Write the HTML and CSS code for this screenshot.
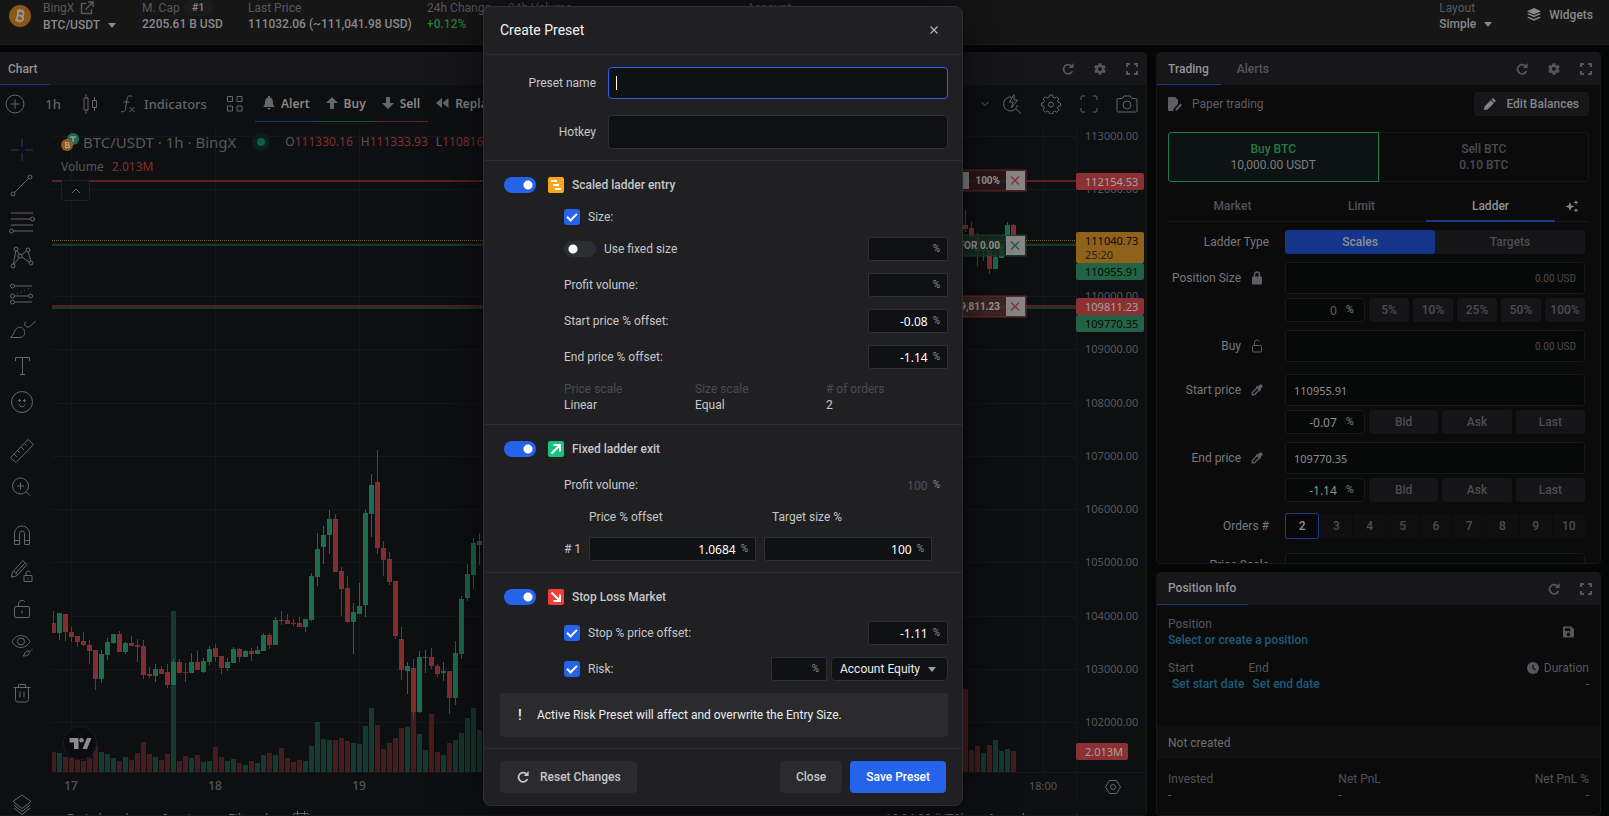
FILE: index.html
```html
<!DOCTYPE html>
<html lang="en">
<head>
<meta charset="utf-8">
<title>Create Preset</title>
<link rel="stylesheet" href="styles.css">
</head>
<body>
<svg class="sprite" aria-hidden="true">
  <symbol id="refresh" viewBox="0 0 12 12"><path d="M9.6 3.2A4.6 4.6 0 1 0 10.4 8" fill="none" stroke="currentColor" stroke-width="1.8"/><path d="M11.6 0v5H6.8z" fill="currentColor"/></symbol>
  <symbol id="gear" viewBox="0 0 24 24"><path fill="currentColor" fill-rule="evenodd" d="M19.4 13c0-.3.1-.6.1-1s0-.7-.1-1l2.1-1.6c.2-.2.3-.4.1-.7l-2-3.4c-.1-.2-.4-.3-.6-.2l-2.5 1a7 7 0 0 0-1.7-1L14.4 2.500c0-.3-.2-.5-.5-.5h-4c-.2 0-.5.2-.5.4L9 5.100a8 8 0 0 0-1.700 1l-2.500-1c-.2-.1-.5 0-.6.2l-2 3.400c-.1.300-.1.500.1.700L4.500 11a7 7 0 0 0 0 2l-2.100 1.600c-.2.200-.3.400-.1.700l2 3.400c.1.200.4.300.6.200l2.500-1 1.700 1 .4 2.700c0 .2.200.4.500.4h4c.2 0 .5-.2.500-.4l.4-2.700 1.700-1 2.500 1c.2.100.5 0 .6-.2l2-3.400c.1-.2.100-.5-.1-.700zM12 15.500a3.500 3.500 0 1 1 0-7 3.500 3.500 0 0 1 0 7z"/></symbol>
  <symbol id="expand" viewBox="0 0 12 12"><path d="M1 4V1h3M8 1h3v3M11 8v3H8M4 11H1V8" fill="none" stroke="currentColor" stroke-width="2"/></symbol>
  <symbol id="caret" viewBox="0 0 8 5"><path d="M0 0h8L4 5z" fill="currentColor"/></symbol>
  <symbol id="drop" viewBox="0 0 14 14"><path fill="currentColor" d="M12.900 1.100a2.200 2.200 0 0 0-3.100 0L8 2.900l-.9-.8-1.500 1.500 4.800 4.800 1.500-1.500-.8-.9 1.800-1.800a2.200 2.200 0 0 0 0-3.100z"/><path d="M7 4.500L1.500 10v2.500H4L9.500 7" fill="none" stroke="currentColor" stroke-width="1.600"/></symbol>
  <symbol id="lock" viewBox="0 0 12 14"><rect x="1" y="5.500" width="10" height="8" rx="1" fill="currentColor"/><path d="M3.500 6V3.500a2.500 2.500 0 0 1 5 0V6" fill="none" stroke="currentColor" stroke-width="1.500"/></symbol>
  <symbol id="unlock" viewBox="0 0 12 14"><rect x="1.500" y="6.500" width="9" height="6.500" rx="1" fill="none" stroke="currentColor"/><path d="M3.500 6.500V3.500a2.500 2.500 0 0 1 4.800-1" fill="none" stroke="currentColor"/></symbol>
</svg>

<header class="topbar">
  <svg class="coin" viewBox="0 0 22 22"><circle cx="11" cy="11" r="11" fill="#8a5617"/><g transform="rotate(12 11 11)" fill="none" stroke="#9a9a9a" stroke-width="1.700"><path d="M8.500 6h3.200a2.300 2.300 0 0 1 0 4.800H8.500zM8.500 10.800h3.700a2.400 2.400 0 0 1 0 4.900H8.500zM7 6h2M7 15.700h2"/><path d="M9.800 4v2M12.200 4v2M9.800 15.500v2M12.200 15.500v2" stroke-width="1.200"/></g></svg>
  <div class="stat stat--pair"><span class="stat__label">BingX <svg class="i14" viewBox="0 0 14 14"><path d="M6 2.500H1.500v10h10V8M8 1h5v5M13 1L5.500 8.500" fill="none" stroke="currentColor" stroke-width="1.500"/></svg></span><button class="stat__value plain">BTC/USDT <svg class="caret"><use href="#caret"/></svg></button></div>
  <div class="stat"><span class="stat__label">M. Cap <b class="rank">#1</b></span><span class="stat__value">2205.61 B USD</span></div>
  <div class="stat"><span class="stat__label">Last Price</span><span class="stat__value">111032.06 (~111,041.98 USD)</span></div>
  <div class="stat"><span class="stat__label">24h Change</span><span class="stat__value up">+0.12%</span></div>
  <div class="stat"><span class="stat__label">24h Volume</span></div>
  <div class="stat"><span class="stat__label">Account</span></div>
  <div class="stat"><span class="stat__label">Layout</span><button class="stat__value plain">Simple <svg class="caret"><use href="#caret"/></svg></button></div>
  <button class="plain widgets"><svg class="i14" viewBox="0 0 14 14" fill="currentColor"><path d="M7 0l7 3.200-7 3.200-7-3.200zM0 6l1.800-.8L7 7.600l5.200-2.400L14 6 7 9.200zM0 9.500l1.800-.8L7 11l5.200-2.300 1.800.8-7 3.300z"/></svg>Widgets</button>
</header>

<main class="workspace">
  <section class="panel chart">
    <div class="panel__head"><a class="tab tab--on" href="#">Chart</a><span class="grow"></span>
      <button class="plain" aria-label="Refresh"><svg class="i12"><use href="#refresh"/></svg></button><button class="plain" aria-label="Settings"><svg class="i14"><use href="#gear"/></svg></button><button class="plain" aria-label="Expand"><svg class="i12"><use href="#expand"/></svg></button></div>
    <div class="tv-top">
      <button class="plain tv-plus" aria-label="Add"><svg class="i20" viewBox="0 0 20 20"><circle cx="10" cy="10" r="9"/><path d="M10 5.500v9M5.500 10h9"/></svg></button>
      <button class="plain tv-int">1h</button>
      <button class="plain tv-type" aria-label="Candles"><svg width="14" height="20" viewBox="0 0 14 20"><path d="M1 4h4v12H1zM3 0v4M3 16v4M9.500 6.500h4v7h-4zM11.500 3v3.500M11.500 13.500V17"/></svg></button>
      <button class="plain tv-ind"><svg width="14" height="18" viewBox="0 0 14 18"><path d="M11 1.500C8 0 6.500 1 6 4L4.500 14c-.4 2.500-2 3.500-4.500 2.500M2.500 7h6M8.500 12l5 5M13.500 12l-5 5"/></svg>Indicators</button>
      <button class="plain tv-grid" aria-label="Templates"><svg width="18" height="18" viewBox="0 0 18 18"><path d="M1.500 1.500h5v5h-5zM11 1.500h5v5h-5zM1.500 11h5v5h-5zM11 11h5v5h-5z"/></svg></button>
      <button class="tv-act tv-act--blue"><svg width="12" height="14" viewBox="0 0 12 14"><path class="solid" d="M5 0h2v1.500c2.500.5 3 2.500 3 5 0 2 .5 3 2 4.500H0c1.500-1.500 2-2.500 2-4.500 0-2.500.5-4.500 3-5zM4.500 12h3a1.500 1.500 0 0 1-3 0z"/></svg>Alert</button>
      <button class="tv-act tv-act--green"><svg width="12" height="12" viewBox="0 0 12 12"><path class="solid" d="M6 0l6 6H8v6H4V6H0z"/></svg>Buy</button>
      <button class="tv-act tv-act--red"><svg width="12" height="12" viewBox="0 0 12 12"><path class="solid" d="M6 12l6-6H8V0H4v6H0z"/></svg>Sell</button>
      <button class="tv-act"><svg width="13" height="10" viewBox="0 0 13 10"><path class="solid" d="M6 0v10L0 5zM12.500 0v10l-6-5z"/></svg>Replay</button>
      <span class="grow"></span>
      <button class="plain tv-more" aria-label="More"><svg width="8" height="6" viewBox="0 0 8 6"><path d="M.5 1L4 4.500 7.500 1"/></svg></button>
      <button class="plain" aria-label="Quick search"><svg class="i20" viewBox="0 0 20 20"><path d="M8 3a7 7 0 1 0 6.500 8M13 15l5 4.500M11 .5L6.500 8H10l-1.500 6L14.500 6H11z"/></svg></button>
      <button class="plain" aria-label="Chart settings"><svg class="i20" viewBox="0 0 20 20"><path d="M8.500 1h3l.6 2.300 1.600.7 2-1.200 2.100 2.100-1.200 2 .7 1.600 2.200.6v2.800l-2.200.6-.7 1.600 1.200 2-2.100 2.100-2-1.200-1.600.7-.6 2.300h-3l-.6-2.300-1.600-.7-2 1.200-2.100-2.100 1.200-2-.7-1.600L.5 11.900V9.100l2.200-.6.700-1.600-1.200-2 2.100-2.100 2 1.200 1.600-.7z"/><circle cx="10" cy="10.500" r="2.500"/></svg></button>
      <button class="plain" aria-label="Fullscreen"><svg width="18" height="18" viewBox="0 0 18 18"><path d="M1 5V2.500A1.500 1.500 0 0 1 2.500 1H5M13 1h2.500A1.500 1.500 0 0 1 17 2.500V5M17 13v2.500a1.500 1.500 0 0 1-1.500 1.500H13M5 17H2.500A1.500 1.500 0 0 1 1 15.500V13"/></svg></button>
      <button class="plain" aria-label="Snapshot"><svg width="22" height="18" viewBox="0 0 22 18"><path d="M2.500 3.500H6L8 1h6l2 2.500h3.500A1.500 1.500 0 0 1 21 5v10.500a1.500 1.500 0 0 1-1.500 1.500h-17A1.500 1.500 0 0 1 1 15.500V5a1.500 1.500 0 0 1 1.500-1.500z"/><circle cx="11" cy="10" r="4"/></svg></button>
    </div>
    <div class="tv-body">
      <nav class="tools">
        <svg class="cross" viewBox="0 0 28 28"><path d="M14 3v8M14 17v8M3 14h8M17 14h8"/></svg>
        <svg viewBox="0 0 28 28"><circle cx="22" cy="5" r="2"/><circle cx="5" cy="22" r="2"/><path d="M6.500 20.500l14-14"/></svg>
        <svg viewBox="0 0 28 28"><path d="M3 5h22M3 11h19.500M3 17h22M6 23h19"/><circle cx="24.500" cy="11" r="2"/><circle cx="3.500" cy="23" r="2"/></svg>
        <svg viewBox="0 0 28 28"><circle cx="8" cy="5" r="2"/><circle cx="20" cy="6" r="2"/><circle cx="12" cy="12" r="2"/><circle cx="23" cy="19" r="2"/><circle cx="5" cy="22" r="2"/><path d="M7.800 7L5.300 20M9 6.800l2.300 3.500M13.500 10.700l5-3.500M20.300 8l2.500 9M13.700 13l7.800 5M11 13.700L6 20.300"/></svg>
        <svg viewBox="0 0 28 28"><circle cx="4.500" cy="6" r="2"/><circle cx="4.500" cy="16" r="2"/><circle cx="22.500" cy="16" r="2"/><circle cx="4.500" cy="22" r="2"/><path d="M6.500 6H24M6.500 16h14M6.500 22H24"/><path d="M9 14l14-6.500" stroke-dasharray="1 3"/></svg>
        <svg viewBox="0 0 28 28"><path d="M2.500 21.500c3-2 3.500-6 5.500-8.500 2-2.300 5.500-2.300 7.500 0 2 2.500 2 8.500-4.500 8.500zM18 5.500c-2 2-1.500 3.500-.5 4.500 1.500 1.500 3.500 1.500 5 0L28 4.500"/></svg>
        <svg viewBox="0 0 28 28"><path d="M7.500 9V5.500h14V9M14.500 5.500V22M12 22.500h5"/></svg>
        <svg viewBox="0 0 28 28"><circle cx="14" cy="14" r="10.500"/><path d="M10 12.500h3M11.500 11v3M15 12.500h3M16.500 11v3M11 16.500c0 3 6 3 6 0"/></svg>
        <svg class="gap" viewBox="0 0 28 28"><path d="M2.500 20.500L20 2.500l5.500 5L8 25.500zM6 17l3 3M9.500 13.500l2 2M13 10l3 3M16.500 6.500l2 2"/></svg>
        <svg viewBox="0 0 28 28"><circle cx="12.500" cy="13" r="8"/><path d="M12.500 9.500v7M9 13h7M18 18.500l4 4"/></svg>
        <svg class="gap" viewBox="0 0 28 28"><path d="M6.500 22.500v-11a7.500 7.500 0 0 1 15 0v11h-5v-11a2.500 2.500 0 0 0-5 0v11zM6.500 18.500h5M16.500 18.500h5"/></svg>
        <svg viewBox="0 0 28 28"><path d="M3.500 19l1-5L15 2.500l4 4L8.500 18zM6 13l3.500 4M8 15l9-10M16 17.500h8v6h-8zM18 17.500V15a2.200 2.200 0 0 1 4.200-.6M20 20v1.500"/></svg>
        <svg viewBox="0 0 28 28"><rect x="6.500" y="12.500" width="15" height="11" rx="1.500"/><path d="M10.500 12.500V10a3.500 3.500 0 0 1 6.500-2M14 16.500v3"/></svg>
        <svg viewBox="0 0 28 28"><path d="M4 11.500c4-8 14-8 18 0-4 8-14 8-18 0z"/><circle cx="13" cy="11.500" r="3.500"/><path d="M15 26c2-1 1-3 3-4.500 2-1 4 .5 3 2.500-1 1.500-3 2-6 2zM20.500 20.500c1 1.500 2 1 4-1.500"/></svg>
        <svg class="gap" viewBox="0 0 28 28"><path d="M5.500 8.500h17M7.500 8.500v12a2.500 2.500 0 0 0 2.500 2.500h8a2.500 2.500 0 0 0 2.500-2.500v-12M10.500 8.500v-3h7v3M12 12.500v6M16 12.500v6"/></svg>
        <svg class="last" viewBox="0 0 28 28"><path d="M14 2l9 6.500-9 7-9-7zM6 12l8 6.500 8-6.500M6 15l8 6.500 8-6.500"/></svg>
      </nav>
      <div class="plot">
        <svg class="plot__svg"><g id="plot" transform="translate(-52 -126)"></g></svg>
        <div class="legend">
          <div class="legend__row"><svg width="18" height="18" viewBox="0 0 18 18"><circle cx="12" cy="6" r="6" fill="#1c6a55"/><path d="M9 4h6M12 4v5" stroke="#999" stroke-width="1.500"/><circle cx="6" cy="12" r="6" fill="#925a18"/><path d="M4.500 9.500h2.200a1.200 1.200 0 0 1 0 2.500H4.800zM4.800 12h2.400a1.200 1.200 0 0 1 0 2.600H4.600z" fill="none" stroke="#aaa" stroke-width="1.200"/></svg><span class="legend__name">BTC/USDT · 1h · BingX</span><i class="live"></i><span class="ohlc">O<b>111330.16</b></span><span class="ohlc">H<b>111333.93</b></span><span class="ohlc">L<b>110816.00</b></span></div>
          <div class="legend__vol">Volume <b>2.013M</b></div>
          <button class="legend__fold" aria-label="Collapse"><svg width="10" height="6" viewBox="0 0 10 6"><path d="M1 5l4-4 4 4"/></svg></button>
        </div>
        <svg class="tvlogo" viewBox="0 0 34 34"><circle cx="17" cy="17" r="16.500" fill="#0b0c12" stroke="#1c1e26"/><path fill="#8c8c8c" d="M6.500 12h9v11h-4.500v-6.500H6.500zM24 12h4.500L24 23h-4.500z"/><circle cx="18.500" cy="14.200" r="2.200" fill="#8c8c8c"/></svg>
        <div class="tv-foot"><span>Period</span><span>by</span><span>Session</span><span>Filtered</span><svg width="18" height="16" viewBox="0 0 18 16"><path d="M1 15V4.500A2 2 0 0 1 3 2.500h12a2 2 0 0 1 2 2V15M5.500 0v4M12.500 0v4"/></svg><span class="grow"></span><span>12:34:38 (UTC)</span><span>%</span><span>log</span><span>auto</span></div>
      </div>
    </div>
  </section>

  <div class="side">
    <section class="panel trading">
      <div class="panel__head"><a class="tab tab--on" href="#">Trading</a><a class="tab" href="#">Alerts</a><span class="grow"></span>
        <button class="plain" aria-label="Refresh"><svg class="i12"><use href="#refresh"/></svg></button><button class="plain" aria-label="Settings"><svg class="i14"><use href="#gear"/></svg></button><button class="plain" aria-label="Expand"><svg class="i12"><use href="#expand"/></svg></button></div>
      <div class="trading__body">
        <div class="paper"><svg class="i14" viewBox="0 0 14 14"><path fill="currentColor" d="M0 1a1 1 0 0 1 1-1h6l3 3v4l-4.500 5v2H1a1 1 0 0 1-1-1zM12.500 6.500l1.500 1.500-5 5.500H7.500V12z"/></svg>Paper trading<span class="grow"></span><button class="chip chip--edit"><svg class="i12" viewBox="0 0 12 12"><path fill="currentColor" d="M9 0l3 3-1.500 1.500-3-3zM6.800 2.200l3 3L3.500 11.500 0 12l.5-3.500z"/></svg>Edit Balances</button></div>
        <div class="sides"><button class="sidebtn sidebtn--buy"><em>Buy BTC</em>10,000.00 USDT</button><button class="sidebtn">Sell BTC<br>0.10 BTC</button></div>
        <div class="otabs"><a href="#">Market</a><a href="#">Limit</a><a class="on" href="#">Ladder</a><svg width="14" height="14" viewBox="0 0 14 14"><path fill="currentColor" d="M5 3l1.200 3.300L9.500 7.500 6.200 8.700 5 12 3.800 8.700.5 7.500l3.300-1.200zM11 1l.7 1.800 1.800.7-1.800.7L11 6l-.7-1.800-1.800-.7 1.800-.7zM11 9l.7 1.600 1.600.7-1.600.7L11 13.600l-.7-1.600-1.600-.7 1.600-.7z"/></svg></div>
        <div class="form">
          <span class="lab">Ladder Type</span><div class="seg"><button class="on">Scales</button><button>Targets</button></div>
          <label class="lab lab--icon" for="size">Position Size <svg><use href="#lock"/></svg></label><div class="col"><input id="size" class="box box--ph" placeholder="0.00 USD"><div class="line"><span class="pct"><input aria-label="Size percent" value="0"><i>%</i></span><button class="chip">5%</button><button class="chip">10%</button><button class="chip">25%</button><button class="chip">50%</button><button class="chip">100%</button></div></div>
          <label class="lab lab--icon" for="buy">Buy <svg><use href="#unlock"/></svg></label><input id="buy" class="box box--ph box--buy" placeholder="0.00 USD">
          <label class="lab lab--icon" for="sp">Start price <svg><use href="#drop"/></svg></label><div class="col"><input id="sp" class="box" value="110955.91"><div class="line"><span class="pct"><input aria-label="Start percent" value="-0.07"><i>%</i></span><button class="chip">Bid</button><button class="chip">Ask</button><button class="chip">Last</button></div></div>
          <label class="lab lab--icon" for="ep">End price <svg><use href="#drop"/></svg></label><div class="col"><input id="ep" class="box" value="109770.35"><div class="line"><span class="pct"><input aria-label="End percent" value="-1.14"><i>%</i></span><button class="chip">Bid</button><button class="chip">Ask</button><button class="chip">Last</button></div></div>
          <span class="lab lab--orders">Orders #</span><div class="orders"><button class="on">2</button><button>3</button><button>4</button><button>5</button><button>6</button><button>7</button><button>8</button><button>9</button><button>10</button></div>
          <label class="lab lab--scale" for="ps">Price Scale</label><input id="ps" class="box box--scale" value="Linear">
        </div>
      </div>
    </section>
    <section class="panel position">
      <div class="panel__head"><a class="tab tab--on" href="#">Position Info</a><span class="grow"></span><button class="plain" aria-label="Refresh"><svg class="i12"><use href="#refresh"/></svg></button><button class="plain" aria-label="Expand"><svg class="i12"><use href="#expand"/></svg></button></div>
      <div class="pos">
        <div class="pos__row"><div>Position<br><a class="bold" href="#">Select or create a position</a></div><span class="grow"></span><svg class="save" viewBox="0 0 12 12"><path fill="currentColor" fill-rule="evenodd" d="M1 0h8l3 3v8a1 1 0 0 1-1 1H1a1 1 0 0 1-1-1V1a1 1 0 0 1 1-1zM2 2v3h6V2zM6 6.500a2 2 0 1 0 0 4 2 2 0 0 0 0-4z"/></svg></div>
        <div class="pos__row pos__row--dates"><div>Start<br><a href="#">Set start date</a></div><div>End<br><a href="#">Set end date</a></div><span class="grow"></span><div class="right"><svg class="i12" viewBox="0 0 12 12"><circle cx="6" cy="6" r="6" fill="currentColor"/><path d="M6 2.500V6l2.500 2" fill="none" stroke="#0b0b0c" stroke-width="1.200"/></svg> Duration<br>-</div></div>
      </div>
      <div class="pos__band">Not created</div>
      <div class="pnl"><div>Invested<br>-</div><div>Net PnL<br>-</div><div class="right">Net PnL %<br>-</div></div>
    </section>
  </div>
</main>

<dialog class="modal" open aria-labelledby="title">
  <header class="modal__head"><h1 id="title">Create Preset</h1><button class="plain x" aria-label="Close dialog"><svg width="8" height="8" viewBox="0 0 8 8"><path d="M.5.5l7 7M7.500.5l-7 7"/></svg></button></header>
  <div class="names"><label for="pn">Preset name</label><input id="pn" class="names__in names__in--focus"><label for="hk">Hotkey</label><input id="hk" class="names__in names__in--tall"></div>

  <section class="sec">
    <div class="r r--title"><input type="checkbox" class="toggle" id="t1" checked><svg class="badge" viewBox="0 0 16 16"><rect width="16" height="16" rx="2" fill="#faa61a"/><path d="M3 3h6v2H3zM5 7h6v2H5zM7 11h6v2H7z" fill="#fff"/></svg><label for="t1">Scaled ladder entry</label></div>
    <div class="r r--short in"><input type="checkbox" class="check" id="c1" checked><label for="c1">Size:</label></div>
    <div class="r in"><input type="checkbox" class="toggle" id="t2"><label for="t2">Use fixed size</label><span class="num"><input aria-label="Fixed size"><i>%</i></span></div>
    <div class="r in"><label for="n1">Profit volume:</label><span class="num"><input id="n1"><i>%</i></span></div>
    <div class="r in"><label for="n2">Start price % offset:</label><span class="num"><input id="n2" value="-0.08"><i>%</i></span></div>
    <div class="r in"><label for="n3">End price % offset:</label><span class="num"><input id="n3" value="-1.14"><i>%</i></span></div>
    <dl class="scales"><div><dt>Price scale</dt><dd>Linear</dd></div><div><dt>Size scale</dt><dd>Equal</dd></div><div><dt># of orders</dt><dd>2</dd></div></dl>
  </section>

  <section class="sec sec--exit">
    <div class="r r--title"><input type="checkbox" class="toggle" id="t3" checked><svg class="badge" viewBox="0 0 16 16"><rect width="16" height="16" rx="2" fill="#19c37d"/><path d="M3.500 12.500L11 5M5.500 4H12v6.500" fill="none" stroke="#fff" stroke-width="2"/></svg><label for="t3">Fixed ladder exit</label></div>
    <div class="r in"><label for="n4">Profit volume:</label><span class="num num--off"><input id="n4" value="100" disabled><i>%</i></span></div>
    <div class="targets"><span></span><label for="n5">Price % offset</label><label for="n6">Target size %</label><span class="targets__n"># 1</span><span class="num"><input id="n5" value="1.0684"><i>%</i></span><span class="num"><input id="n6" value="100"><i>%</i></span></div>
  </section>

  <section class="sec">
    <div class="r r--title"><input type="checkbox" class="toggle" id="t4" checked><svg class="badge" viewBox="0 0 16 16"><rect width="16" height="16" rx="2" fill="#f23f36"/><path d="M3.500 3.500L11 11M12 5.500V12H5.500" fill="none" stroke="#fff" stroke-width="2"/></svg><label for="t4">Stop Loss Market</label></div>
    <div class="r in"><input type="checkbox" class="check" id="c2" checked><label for="c2">Stop % price offset:</label><span class="num"><input aria-label="Stop offset" value="-1.11"><i>%</i></span></div>
    <div class="r in"><input type="checkbox" class="check" id="c3" checked><label for="c3">Risk:</label><span class="num num--risk"><input aria-label="Risk"><i>%</i></span><span class="pick"><select aria-label="Risk base"><option>Account Equity</option></select><svg class="caret"><use href="#caret"/></svg></span></div>
    <p class="note"><b>!</b>Active Risk Preset will affect and overwrite the Entry Size.</p>
  </section>

  <footer class="modal__foot"><button class="btn btn--reset"><svg class="i12"><use href="#refresh"/></svg>Reset Changes</button><span class="grow"></span><button class="btn">Close</button><button class="btn btn--main">Save Preset</button></footer>
</dialog>
<script src="chart.js"></script>
</body>
</html>
```
FILE: styles.css
```css
* { box-sizing: border-box; }
body { margin: 0; height: 100vh; overflow: hidden; display: flex; flex-direction: column; background: #050606; color: #6d6e72; font: 12px/16px Roboto, sans-serif; }
button, input, select { font: inherit; color: inherit; }
button { cursor: pointer; border: 0; background: none; padding: 0; }
input { min-width: 0; }
a { color: inherit; text-decoration: none; }
i, em { font-style: normal; }
svg { flex: none; }
.sprite { position: absolute; width: 0; height: 0; }
.grow { flex: 1; }
.plain { display: flex; align-items: center; }
.i12 { width: 12px; height: 12px; }
.i14 { width: 14px; height: 14px; }
.i20 { width: 20px; height: 20px; }
.caret { width: 8px; height: 5px; }

.topbar { flex: none; display: grid; grid-template-columns: 34px 99px 106px 179px 81px 239px 1fr 88px auto; height: 45px; padding: 0 16px 0 9px; background: #161617; border-bottom: 1px solid #1f1f20; overflow: hidden; }
.coin { width: 22px; height: 22px; margin-top: 5px; }
.stat { display: flex; flex-direction: column; white-space: nowrap; color: #57595d; }
.stat__label { display: flex; align-items: center; height: 16px; }
.stat__label .i14 { margin-left: 6px; }
.stat__value { display: flex; align-items: center; height: 16px; font-weight: 500; color: #88898c; }
.stat__value .caret { margin-left: 8px; }
.stat--pair .stat__value { height: 18px; }
.rank { margin-left: 4px; padding: 0 8px; border-radius: 8px; background: #1b1b1c; color: #838487; font-weight: 500; font-size: 11px; }
.up { color: #237e42; }
.widgets { height: 30px; gap: 8px; font-weight: 500; color: #88898c; }

.workspace { flex: 1; min-height: 0; display: grid; grid-template-columns: 1fr 445px; gap: 9px; padding: 7px 8px 0 0; }
.panel { min-width: 0; min-height: 0; display: flex; flex-direction: column; overflow: hidden; border: 1px solid #161718; border-radius: 4px; background: #0b0b0c; }
.panel__head { flex: none; display: flex; align-items: center; height: 32px; padding-right: 7px; background: #17171a; color: #55575c; }
.panel__head .plain { justify-content: center; width: 32px; height: 30px; }
.panel__head .plain:last-child { width: 14px; margin: 0 0 0 9px; }
.tab { display: flex; align-items: center; height: 32px; padding: 0 12px 0 11px; font-weight: 500; border-bottom: 1px solid transparent; }
.tab--on { color: #939497; border-color: #173a8c; }
.tab + .tab { margin-left: 5px; }

.chart { border-left: 0; background: #0e0f11; border-radius: 0 4px 4px 0; }
.chart .tab { padding: 0 12px 0 8px; }
.tv-top { flex: none; display: flex; align-items: center; height: 41px; padding: 0 0 4px 5px; font: 13px "Noto Sans", sans-serif; color: #636466; }
.tv-top svg, .tools svg, .tv-foot svg, .legend__fold svg { fill: none; stroke: #66676a; }
.tv-top svg .solid { fill: #66676a; stroke: none; }
.tv-top .plain { justify-content: center; width: 38px; }
.tv-top .tv-plus { width: 20px; }
.tv-top .tv-int { width: 56px; font-weight: 500; }
.tv-top .tv-type { width: 18px; }
.tv-top .tv-ind { width: 86px; margin-left: 22px; gap: 9px; font-weight: 500; }
.tv-top .tv-grid { width: 48px; padding-left: 8px; }
.tv-act { display: flex; align-items: center; gap: 6px; height: 37px; padding: 0 8px; font-weight: 600; font-size: 12px; color: #86878a; border-bottom: 1px solid transparent; }
.tv-act--blue { border-color: #173a8c; }
.tv-act--green { border-color: #14543a; }
.tv-act--red { border-color: #6b2225; }
.tv-top .tv-more { width: 18px; }
.tv-body { flex: 1; min-height: 0; display: flex; }
.tools { flex: none; width: 52px; display: flex; flex-direction: column; padding: 6px 8px 0; overflow: hidden; }
.tools svg { width: 28px; height: 28px; margin: 4px 0; }
.tools .cross { stroke: #183c96; }
.tools .gap { margin-top: 17px; }
.tools .last { margin-top: 82px; }
.plot { position: relative; flex: 1; min-width: 0; overflow: hidden; }
.plot__svg { display: block; width: 100%; height: 100%; }
.plot text { font: 11px "Noto Sans", sans-serif; }
.plot .day { font-size: 12px; font-weight: 500; }
.plot .order { font: 700 10px Roboto, sans-serif; }
.legend { position: absolute; top: 5px; left: 9px; font-family: "Noto Sans", sans-serif; color: #57585a; }
.legend b { font-weight: 400; color: #852e31; }
.legend__row { display: flex; align-items: center; height: 22px; white-space: nowrap; }
.legend__name { margin: 0 21px 0 4px; font-size: 15px; }
.live { width: 8px; height: 8px; margin-right: 20px; border-radius: 50%; background: #08614f; box-shadow: 0 0 0 5px #0b1f1d; }
.ohlc { margin-right: 8px; font-size: 12px; }
.legend__vol { height: 26px; margin-top: 1px; line-height: 26px; font-size: 12px; }
.legend__vol b { margin-left: 5px; }
.legend__fold { display: flex; align-items: center; justify-content: center; width: 29px; height: 21px; border: 1px solid #1d1f22; border-radius: 3px; background: #0e0f11; }
.tvlogo { position: absolute; left: 11px; top: 600px; width: 34px; height: 34px; }
.tv-foot { position: absolute; left: 15px; right: 60px; top: 685px; display: flex; gap: 24px; white-space: nowrap; }

.side { min-height: 0; display: flex; flex-direction: column; gap: 8px; }
.trading { height: 67%; flex: none; }
.trading__body { flex: 1; min-height: 0; overflow: hidden; padding: 7px 11px 0; }
.paper { display: flex; align-items: center; gap: 10px; height: 24px; color: #5d5f64; }
.chip { flex: 1; display: flex; align-items: center; justify-content: center; height: 24px; border-radius: 3px; background: #151517; color: #4c4d52; font-weight: 500; }
.chip--edit { flex: none; gap: 10px; padding: 0 10px; color: #838487; background: #17171a; }
.sides { display: flex; margin-top: 16px; height: 50px; }
.sidebtn { flex: 1; border: 1px solid #161718; color: #4a4b50; border-radius: 0 2px 2px 0; font-weight: 500; }
.sidebtn--buy { border-color: #247a42; background: #0d1312; color: #7d7e82; border-radius: 3px 0 0 3px; font-weight: 400; }
.sidebtn em { display: block; color: #247a42; font-weight: 500; }
.otabs { display: flex; align-items: center; height: 32px; margin-top: 8px; border-bottom: 1px solid #17181a; font-weight: 500; color: #505257; }
.otabs a { flex: 1; height: 32px; line-height: 32px; text-align: center; border-bottom: 2px solid transparent; }
.otabs .on { color: #909194; border-color: #173a8c; }
.otabs svg { margin: 0 10px; color: #85868a; }
.form { display: grid; grid-template-columns: 101px 1fr; column-gap: 16px; row-gap: 8px; padding: 8px 4px 0 0; color: #77787c; }
.lab { text-align: right; line-height: 24px; white-space: nowrap; }
.lab--icon { display: flex; justify-content: flex-end; align-items: center; height: 32px; padding-right: 6px; gap: 10px; }
.lab--icon svg { width: 12px; height: 14px; color: #5d5f64; }
.seg { display: flex; background: #151517; border-radius: 3px; }
.seg button { flex: 1; height: 24px; border-radius: 3px; color: #4c4d52; font-weight: 500; }
.seg .on { background: #15358a; color: #8c8f98; }
.col { display: grid; gap: 4px; }
.line { display: flex; gap: 4px; }
.box { width: 100%; height: 32px; padding: 0 8px; border: 1px solid #17181a; border-radius: 3px; background: #070808; color: #8e8f91; font: 11px "Noto Sans", sans-serif; outline: 0; }
.box--ph { text-align: right; font: 10px Roboto, sans-serif; }
.box--ph::placeholder { color: #4c4d52; }
.box--buy { margin-bottom: 4px; }
.pct { display: flex; align-items: center; width: 80px; height: 24px; padding-right: 10px; gap: 9px; border: 1px solid #17181a; border-radius: 3px; background: #070808; color: #5d5f64; }
.pct input { flex: 1; width: 0; padding: 0; border: 0; background: none; text-align: right; color: #8e8f91; font: 12px "Noto Sans", sans-serif; }
.pct i { font-size: 11px; font-weight: 700; }
.line .pct:has([value="0"]) input { color: #5d5f64; }
.lab--orders { padding-top: 4px; }
.orders { display: flex; align-items: center; gap: 1px; margin-top: 3px; }
.orders button { flex: 1; height: 24px; border-radius: 2px; background: #0f0f10; color: #4c4d52; font-weight: 500; }
.orders .on { height: 26px; border: 1px solid #173a8c; background: #070808; color: #909194; }
.lab--scale, .box--scale { margin-top: 6px; }

.pos { padding: 11px 11px 0; color: #55575b; height: 124px; }
.pos a { color: #1b5c7d; font-weight: 500; }
.pos__row { display: flex; align-items: center; }
.pos__row--dates { margin-top: 12px; }
.pos__row--dates a { margin: 0 4px; }
.pos .save { width: 11px; height: 12px; margin-right: 15px; }
.right { text-align: right; }
.right svg { vertical-align: -2px; margin-right: 2px; }
.pos__band { height: 33px; padding: 0 11px; line-height: 34px; background: #101011; color: #6d6e72; }
.pnl { display: grid; grid-template-columns: 1fr 1fr 1fr; padding: 12px 11px; color: #505257; }
.pnl div:nth-child(2) { padding-left: 30px; }

.modal { position: absolute; left: 483px; top: 6px; width: 480px; margin: 0; padding: 0; border: 1px solid #2f2f32; border-radius: 8px; background: #202022; color: #c5c7ca; box-shadow: 0 0 50px #000a; }
.modal__head { display: flex; align-items: center; justify-content: space-between; height: 48px; padding: 0 24px 2px 16px; border-bottom: 1px solid #2d2d30; }
.modal__head h1 { margin: 0; font-size: 14px; font-weight: 400; color: #f1f2f3; }
.x svg { fill: none; stroke: #a5adb8; stroke-width: 1.4; }
.names { display: grid; grid-template-columns: 1fr 340px; align-items: center; gap: 16px 12px; padding: 12px 14px 11px; border-bottom: 1px solid #2d2d30; }
.names label { text-align: right; }
.names__in { height: 32px; border: 1px solid #2d2f31; border-radius: 4px; background: #101113; outline: 0; padding: 0 8px; }
.names__in--tall { height: 34px; }
.names__in--focus { border-color: #2563eb; caret-color: transparent; background: linear-gradient(#fff, #fff) 7px 50% / 1px 14px no-repeat #101113; }
.sec { padding: 6px 14px 11px 20px; border-bottom: 1px solid #2d2d30; }
.r { display: flex; align-items: center; gap: 8px; height: 36px; }
.r--title { font-weight: 500; }
.r--title .toggle { margin-right: 4px; }
.r--short { height: 28px; }
.in { padding-left: 60px; }
.badge { width: 16px; height: 16px; }
.toggle { appearance: none; width: 32px; height: 16px; margin: 0; border-radius: 8px; background: radial-gradient(circle at 9px 8px, #fff 4px, transparent 5px) #2b2f32; }
.toggle:checked { background: radial-gradient(circle at 24px 8px, #fff 4px, transparent 5px) #2563eb; }
.check { appearance: none; display: grid; place-items: center; width: 16px; height: 16px; margin: 0; border-radius: 3px; background: #2563eb; }
.check::before { content: ""; width: 8px; height: 4px; margin-bottom: 2px; border: solid #fff; border-width: 0 0 2px 2px; transform: rotate(-45deg); }
.num { display: flex; align-items: center; width: 80px; height: 24px; margin-left: auto; padding-right: 7px; gap: 5px; border: 1px solid #2d2f31; border-bottom-left-radius: 3px; background: #101113; }
.num input { flex: 1; width: 0; padding: 0; border: 0; outline: 0; background: none; color: #fff; text-align: right; font: 12px "Noto Sans", sans-serif; }
.num i { font-size: 10px; color: #84919f; }
.num--off { border-color: transparent; background: none; }
.num--off input { color: #4b5463; }
.num--risk { width: 56px; }
.scales { display: grid; grid-template-columns: 131px 131px 1fr; margin: 0; padding: 6px 0 0 60px; }
.scales dt { color: #454b57; }
.scales dd { margin: 0; }
.sec--exit { padding-bottom: 5px; }
.targets { display: grid; grid-template-columns: 25px 167px 176px; grid-template-rows: 28px 36px; align-items: center; padding-left: 60px; }
.targets label + label { padding-left: 16px; }
.targets .num { width: auto; margin-left: 0; }
.targets .num + .num { margin-left: 8px; }
.pick { position: relative; width: 117px; margin-left: -4px; display: flex; align-items: center; }
.pick select { appearance: none; width: 100%; height: 24px; padding: 0 8px; border: 1px solid #2d2f31; border-radius: 4px; background: #101113; color: #eceded; }
.pick .caret { position: absolute; right: 12px; color: #9a9da1; pointer-events: none; }
.note { display: flex; align-items: center; height: 44px; margin: 6px 0 0 -4px; border-radius: 4px; background: #2b2b2e; color: #eceded; }
.note b { width: 37px; padding-left: 18px; font-size: 14px; font-weight: 500; }
.modal__foot { display: flex; gap: 8px; padding: 12px 16px; }
.btn { display: flex; align-items: center; justify-content: center; gap: 11px; height: 32px; padding: 0 16px; border-radius: 4px; background: #2b2b2e; font-weight: 500; }
.btn--reset { padding-left: 17px; }
.btn--main { background: #2563eb; color: #fff; }
```
FILE: chart.js
```javascript
const GREEN = '#1e6b4e', RED = '#812e30', VG = '#153a2f', VR = '#451d1f';
const BASE = 772;
const out = [];
const rect = (x, y, w, h, f, extra = '') => out.push(`<rect x="${x}" y="${y}" width="${w}" height="${h}" fill="${f}" ${extra}/>`);
const text = (x, y, s, f, extra = '') => out.push(`<text x="${x}" y="${y}" fill="${f}" ${extra}>${s}</text>`);

// direction, high, low, body top, body bottom, volume top (thirds of a pixel below y=500)
const left = `r 333 399 369 399 756|g 339 419 339 399 759|r 342 422 342 396 771|r 381 426 396 411 774|r 408 440 408 426 779|r 396 437 423 435 783|r 420 492 435 453 774|r 450 570 450 537 735|g 450 548 462 537 756|g 414 480 426 465 762|g 402 432 402 429 774|r 393 456 402 456 783|g 426 461 429 456 771|r 408 438 429 438 780|r 417 486 435 441 759|r 420 537 438 525 726|r 501 534 522 528 762|g 492 546 507 528 771|r 498 522 507 522 780|r 492 564 516 555 762|g 477 555 486 555 333|r 477 519 486 519 783|r 490 546 516 519 768|g 459 519 486 519 774|r 450 510 486 510 765|g 474 519 483 516 786|g 438 494 447 486 783|r 432 486 444 471 741|r 468 522 468 504 771|g 474 513 486 504 783|g 441 489 447 489 777|r 444 486 447 471 789|g 450 471 453 471 795|r 444 483 453 462 783|g 438 462 450 462 789|g 399 453 405 453 765|r 399 447 405 435 759|g 351 435 360 435 765|r 333 375 360 363 744|r 342 372 360 372 774|r 357 378 369 372 786|r 351 381 369 381 780|g 357 396 357 381 783|g 219 363 228 360 738|g 99 258 147 231 666|g 78 192 105 141 717|g 30 162 57 105 720|r 42 216 57 216 720|r 201 348 213 267 714|r 228 369 264 366 723|g 309 462 336 366 729|g 249 342 318 342 732|g 30 351 39 315 678|g -78 111 -45 42 624|r -150 162 -54 144 675|r 123 228 144 180 747|r 156 255 177 246 729|r 243 417 243 408 714|r 381 540 417 510 684|g 486 582 498 513 681|r 477 657 504 636 630|g 453 639 471 636 702|g 450 519 471 474 750|r 444 507 471 498 642|r 492 531 498 522 756|g 486 543 513 519 765|r 513 642 513 594 729|g 423 615 459 594 720|g 288 477 297 462 699|g 192 303 222 294 654|g 114 267 129 225 624|g 99 195 123 135 690`
  .split('|').map((s, i) => { const [d, ...v] = s.split(' '); return [51 + 6 * i, d, ...v.map(n => Math.round(n / 3) + 500)]; });
const right = [
  [963, 'r', 210, 232, 225, 229, 689], [969, 'r', 222, 240, 228, 238, 750], [975, 'r', 233, 266, 237, 252, 746],
  [981, 'g', 245, 261, 250, 251, 753], [987, 'r', 250, 274, 250, 269, 745], [993, 'g', 250, 269, 257, 269, 740],
  [999, 'g', 243, 258, 246, 258, 751], [1005, 'g', 222, 242, 225, 242, 749], [1011, 'r', 224, 240, 225, 240, 751]
];

for (let i = 0; i < 12; i++) {
  const y = 136 + Math.round(i * 53.3);
  rect(52, y, 1024, 1, '#15171a');
  if (i !== 2) text(1085, y + 4, `${113000 - i * 1000}.00`, '#55565a');
}
for (const x of [71, 215, 359, 1043]) rect(x, 126, 1, 646, '#15171a');
rect(1076, 126, 1, 674, '#15171a');
rect(52, BASE, 1095, 1, '#15171a');

const candles = [...left, ...right];
for (const [x, d, , , , , v] of candles) rect(x, v, 5, BASE - v, d === 'g' ? VG : VR);
for (const [x, d, hi, lo, t, b] of candles) {
  const c = d === 'g' ? GREEN : RED;
  rect(x + 2, hi, 1, lo - hi, c);
  rect(x, t, 5, Math.max(1, b - t), c);
}

rect(52, 180, 1024, 2, '#5a2224');
out.push('<path d="M52 240.500H1076" stroke="#7d6526" stroke-dasharray="1 1"/>');
rect(52, 244, 1024, 2, '#183a2a');
rect(52, 305, 1024, 2, '#4f2021');
rect(52, 307, 1024, 2, '#183a2a');

const order = (y, h, fill, line, label) => {
  rect(900, y, 126, h, fill, `stroke="${line}" stroke-opacity=".7" fill-opacity=".8"`);
  text(1000, y + 14, label, '#a09a9a', 'text-anchor="end" class="order"');
  rect(1006, y + 1, 19, h - 2, '#858585');
  out.push(`<path d="M1011 ${y + h / 2 - 4}l8 8M1019 ${y + h / 2 - 4}l-8 8" stroke="${line}" stroke-width="1.500"/>`);
};
order(170, 21, '#32191b', '#8a3335', '100%');
rect(900, 172, 69, 17, '#858585');
order(235, 21, '#163226', '#1f5c40', 'FOR 0.00');
order(296, 21, '#4a2a26', '#8a3335', '109,811.23');

const tag = (y, h, fill, color, s, w = 68) => {
  rect(1076, y, w, h, fill, 'rx="2"');
  text(1085, y + 13, s, color);
};
tag(173, 17, '#8c3133', '#a9a0a0', '112154.53');
tag(232, 31, '#8f621c', '#0b0b0b', '111040.73');
text(1085, 259, '25:20', '#2c200c');
tag(263, 17, '#216344', '#070a08', '110955.91');
tag(298, 17, '#8c3133', '#a9a0a0', '109811.23');
tag(315, 17, '#216344', '#070a08', '109770.35');
tag(743, 17, '#8c3133', '#a9a0a0', '2.013M', 52);

const mid = 'text-anchor="middle" class="day"';
text(71, 790, '17', '#55565a', mid);
text(215, 790, '18', '#55565a', mid);
text(359, 790, '19', '#55565a', mid);
text(1043, 790, '18:00', '#55565a', 'text-anchor="middle"');
out.push('<path d="M1109.500 780.500h7l4 6.500-4 6.500h-7l-4-6.500zM48 768l-3 4 3 4" fill="none" stroke="#66676a"/><circle cx="1113" cy="787" r="2.500" fill="none" stroke="#66676a"/>');

document.getElementById('plot').innerHTML = out.join('');
```
